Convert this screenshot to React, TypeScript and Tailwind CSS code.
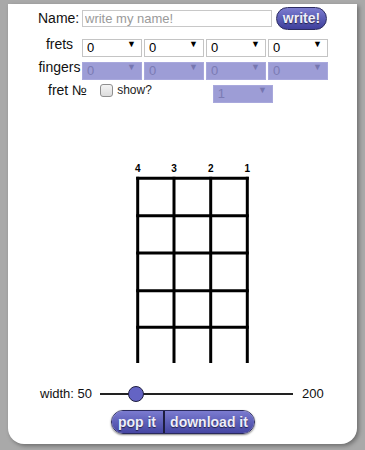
import React from "react";

const strings = [0, 1, 2, 3];

const Select = ({ value, disabled, className }: { value: string; disabled?: boolean; className?: string }) => (
  <div className={`relative h-[18px] w-[60px] ${className ?? ""}`}>
    <select
      disabled={disabled}
      defaultValue={value}
      className={
        disabled
          ? "h-full w-full appearance-none border border-[#a8a8dc] bg-[#9d9dd6] pl-[4px] text-[13px] leading-[16px] text-[#7b7bb4] outline-none"
          : "h-full w-full appearance-none border border-[#c4c4c4] bg-white pl-[4px] text-[13px] leading-[16px] text-black outline-none"
      }
    >
      <option>{value}</option>
    </select>
    <span
      className={`pointer-events-none absolute right-[6px] top-[4px] text-[9px] leading-[10px] ${
        disabled ? "text-[#7676b0]" : "text-black"
      }`}
    >
      ▼
    </span>
  </div>
);

// drawn board, y measured from the top of the svg (page y 99)
const Fretboard = () => {
  const xs = [129.7, 166, 202.7, 239.3];
  const ys = [79.3, 116.7, 154, 191.7, 228.3];
  const labels = ["4", "3", "2", "1"];
  return (
    <svg width="349" height="281" viewBox="0 0 349 281" className="block">
      {xs.map((x, i) => (
        <text
          key={`t${i}`}
          x={x}
          y={73}
          textAnchor="middle"
          fontSize="10"
          fontWeight="bold"
          fontFamily="'Liberation Sans', Arial, sans-serif"
          fill="#000"
        >
          {labels[i]}
        </text>
      ))}
      {ys.map((y, i) => (
        <line key={`h${i}`} x1={xs[0] - 1.5} x2={xs[3] + 1.5} y1={y} y2={y} stroke="#000" strokeWidth="3" />
      ))}
      {xs.map((x, i) => (
        <line key={`v${i}`} x1={x} x2={x} y1={ys[0] - 1.5} y2={264} stroke="#000" strokeWidth="3" />
      ))}
    </svg>
  );
};

export default function App() {
  return (
    <div
      className="h-[450px] w-[365px] overflow-hidden bg-[#a9a9a9] pt-[4px] pl-[8px]"
      style={{ fontFamily: "'Liberation Sans', Arial, sans-serif" }}
    >
      <div className="flex h-[440px] w-[349px] flex-col rounded-b-[16px] bg-white pt-[2px] shadow-[2px_2px_4px_rgba(0,0,0,0.35)]">
        {/* name row */}
        <div className="flex h-[24px] items-center">
          <span className="ml-[30px] w-[44px] text-[14px] text-[#111]">Name:</span>
          <input
            placeholder="write my name!"
            className="h-[17px] w-[190px] border border-[#c8c8c8] px-[2px] text-[13px] leading-[15px] text-black outline-none placeholder:text-[#9a9a9a]"
          />
          <button className="ml-[4px] h-[23px] w-[51px] rounded-full border border-[#2c2c60] bg-gradient-to-b from-[#7c7cd0] to-[#3f3f9c] text-[14px] font-bold text-[#eeeefa] [text-shadow:0_1px_1px_rgba(0,0,0,0.6)]">
            write!
          </button>
        </div>

        {/* frets */}
        <div className="mt-[5px] flex h-[18px] items-center">
          <span className="ml-[29px] w-[45px] text-center text-[14px] text-[#111]">frets</span>
          <div className="flex gap-[2px]">
            {strings.map((s) => (
              <Select key={s} value="0" />
            ))}
          </div>
        </div>

        {/* fingers */}
        <div className="mt-[5px] flex h-[18px] items-center">
          <span className="ml-[29px] w-[45px] text-center text-[14px] text-[#111]">fingers</span>
          <div className="flex gap-[2px]">
            {strings.map((s) => (
              <Select key={s} value="0" disabled />
            ))}
          </div>
        </div>

        {/* fret number */}
        <div className="mt-[5px] flex h-[18px] items-center">
          <span className="ml-[40px] text-[14px] text-[#111]">fret №</span>
          <span className="ml-[13px] h-[13px] w-[13px] rounded-[3px] border border-[#8f8f8f] bg-gradient-to-b from-[#f4f4f4] to-[#dcdcdc]" />
          <span className="ml-[4px] text-[12px] text-[#222]">show?</span>
          <Select value="1" disabled className="ml-[61px]" />
        </div>

        <Fretboard />

        {/* width slider */}
        <div className="flex h-[28px] items-center">
          <span className="ml-[32px] text-[13px] text-[#111]">width: 50</span>
          <div className="relative ml-[8px] h-[2px] w-[193px] bg-[#222]">
            <span className="absolute left-[28px] top-[-7px] h-[16px] w-[16px] rounded-full border-[1.5px] border-[#1f1f40] bg-[#6464c4]" />
          </div>
          <span className="ml-[9px] text-[13px] text-[#111]">200</span>
        </div>

        {/* action buttons */}
        <div className="mt-[2px] flex justify-center">
          <div className="flex h-[24px] overflow-hidden rounded-full border border-[#2a2a5c] shadow-[0_1px_2px_rgba(0,0,0,0.5)]">
            <button className="w-[51px] bg-gradient-to-b from-[#7b7bd0] to-[#4545a2] text-[14px] font-bold text-[#eeeefa] [text-shadow:0_1px_1px_rgba(0,0,0,0.6)]">
              pop it
            </button>
            <span className="w-[2px] bg-[#1e1e40]" />
            <button className="w-[89px] bg-gradient-to-b from-[#7b7bd0] to-[#4545a2] text-[14px] font-bold text-[#eeeefa] [text-shadow:0_1px_1px_rgba(0,0,0,0.6)]">
              download it
            </button>
          </div>
        </div>
      </div>
    </div>
  );
}
